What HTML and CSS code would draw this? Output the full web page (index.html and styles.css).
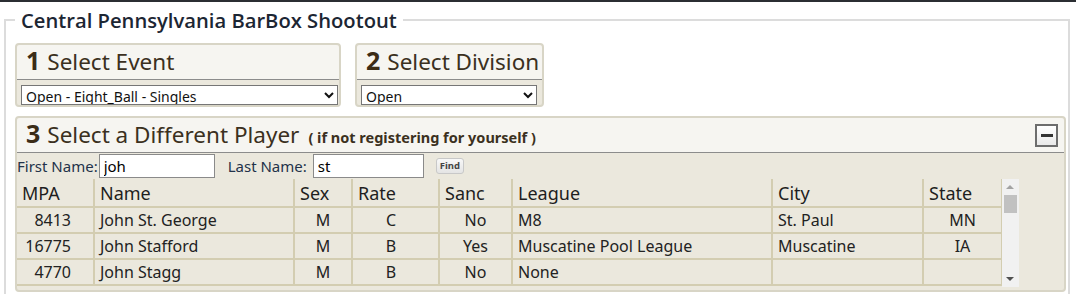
FILE: index.html
```html
<!DOCTYPE html>
<html lang="en">

<head>
  <meta charset="UTF-8">
  <meta name="viewport" content="width=device-width, initial-scale=1.0">
  <title>Register - Central Pennsylvania BarBox Shootout</title>
  <link rel="stylesheet" href="styles.css">
</head>

<body>
  <div class="topbar"></div>
  <fieldset class="event">
    <legend>Central Pennsylvania BarBox Shootout</legend>

    <div class="steps">
      <div class="panel panel-event">
        <div class="panel-head"><span class="num">1</span> Select Event</div>
        <div class="panel-body">
          <select id="event">
            <option>Open - Eight_Ball - Singles</option>
            <option>Open - Nine_Ball - Singles</option>
            <option>Open - Eight_Ball - Scotch Doubles</option>
          </select>
        </div>
      </div>
      <div class="panel panel-division">
        <div class="panel-head"><span class="num">2</span> Select Division</div>
        <div class="panel-body">
          <select id="division">
            <option>Open</option>
            <option>Ladies</option>
          </select>
        </div>
      </div>
    </div>

    <div class="panel panel-player">
      <div class="panel-head">
        <span class="num">3</span> Select a Different Player
        <span class="note">( if not registering for yourself )</span>
        <button class="collapse" title="Collapse"><span></span></button>
      </div>
      <div class="panel-body">
        <form class="search" id="searchForm">
          <label for="first" class="first-label">First Name:</label>
          <input type="text" id="first" value="joh">
          <label for="last" class="last-label">Last Name:</label>
          <input type="text" id="last" value="st">
          <button type="submit" class="find">Find</button>
        </form>
        <div class="results">
          <div class="table-wrap">
            <table class="players">
              <colgroup>
                <col style="width: 77px">
                <col style="width: 200px">
                <col style="width: 58px">
                <col style="width: 87px">
                <col style="width: 73px">
                <col style="width: 260px">
                <col style="width: 151px">
                <col style="width: 79px">
              </colgroup>
              <thead>
                <tr>
                  <th>MPA</th><th>Name</th><th>Sex</th><th>Rate</th><th>Sanc</th><th>League</th><th>City</th><th>State</th>
                </tr>
              </thead>
              <tbody>
                <tr><td class="num-col">8413</td><td>John St. George</td><td class="c">M</td><td class="rate">C</td><td class="c">No</td><td>M8</td><td>St. Paul</td><td class="c">MN</td></tr>
                <tr><td class="num-col">16775</td><td>John Stafford</td><td class="c">M</td><td class="rate">B</td><td class="c">Yes</td><td>Muscatine Pool League</td><td>Muscatine</td><td class="c">IA</td></tr>
                <tr><td class="num-col">4770</td><td>John Stagg</td><td class="c">M</td><td class="rate">B</td><td class="c">No</td><td>None</td><td></td><td class="c"></td></tr>
              </tbody>
            </table>
          </div>
          <div class="scrollbar">
            <div class="arrow up"></div>
            <div class="track"><div class="thumb"></div></div>
            <div class="arrow down"></div>
          </div>
        </div>
      </div>
    </div>
  </fieldset>

  <script>
    document.getElementById('searchForm').addEventListener('submit', (e) => {
      e.preventDefault();
    });
  </script>
</body>

</html>
```

FILE: styles.css
```css
* {
  box-sizing: border-box;
}

body {
  margin: 0;
  font-family: 'Noto Sans', sans-serif;
  background: white;
  color: #222;
}

.topbar {
  height: 2px;
  background: #2b2e33;
}

.event {
  margin: 5px 6px 0 4px;
  padding: 0 2px 10px 9px;
  border: 2px solid #dcdcdc;
}

.event legend {
  padding: 0 6px;
  font-family: 'Open Sans', sans-serif;
  font-weight: 600;
  font-size: 20.2px;
  line-height: 26px;
  color: #1c2633;
}

.steps {
  display: flex;
  gap: 14px;
  margin-top: 10px;
}

.panel {
  border: 2px solid #d8d5c6;
  border-radius: 4px;
  background: #ebe8dd;
}

.panel-head {
  display: flex;
  align-items: baseline;
  height: 35px;
  padding: 0 6px 0 9px;
  background: #f6f5f1;
  border-bottom: 1px solid #8c8c8c;
  border-radius: 3px 3px 0 0;
  font-size: 22.5px;
  line-height: 31px;
  color: #3b3020;
  white-space: nowrap;
}

.panel-head .num {
  font-size: 25px;
  font-weight: bold;
  color: #3b2c17;
  margin-right: 7px;
}

.panel-head .note {
  font-size: 14.5px;
  font-weight: bold;
  margin-left: 9px;
}

.panel-body {
  padding: 5px 3px 0 4px;
}

.panel-body select {
  display: block;
  height: 20px;
  font-family: 'Noto Sans', sans-serif;
  font-size: 14px;
  color: #111;
  border: 1px solid #767676;
  background: white;
}

.panel-event {
  width: 326px;
}

.panel-event select {
  width: 317px;
}

.panel-division {
  width: 189px;
}

.panel-division select {
  width: 176px;
}

.panel-player {
  margin-top: 9px;
}

.panel-player .panel-body {
  padding: 0 0 3px 0;
}

.collapse {
  align-self: center;
  margin-left: auto;
  width: 23px;
  height: 23px;
  padding: 0;
  border: 2px solid #6d6d6d;
  background: linear-gradient(#ffffff, #e9e9e9);
  display: flex;
  align-items: center;
  justify-content: center;
  cursor: pointer;
}

.collapse span {
  display: block;
  width: 12px;
  height: 3px;
  background: #333;
}

.search {
  display: flex;
  align-items: center;
  height: 26px;
  font-size: 15px;
  color: #23324a;
}

.search .first-label {
  margin-right: 1px;
}

.search .last-label {
  margin-left: 13px;
  margin-right: 6px;
}

.search input {
  width: 116px;
  height: 24px;
  padding: 0 4px;
  font-family: 'Noto Sans', sans-serif;
  font-size: 15px;
  border: 1px solid #8a8a8a;
  background: white;
}

.search input#last {
  width: 111px;
}

.find {
  margin-left: 12px;
  height: 16px;
  padding: 0 3px;
  font-family: 'Noto Sans', sans-serif;
  font-size: 9.5px;
  font-weight: bold;
  line-height: 12px;
  color: #444;
  border: 1px solid #c8c8c8;
  border-radius: 3px;
  background: linear-gradient(#f8f8f8, #e4e4e4);
  cursor: pointer;
}

.results {
  display: flex;
  height: 108px;
}

.table-wrap {
  width: 985px;
  overflow: hidden;
}

.players {
  width: 985px;
  table-layout: fixed;
  border-collapse: collapse;
  font-size: 16px;
}

.players th,
.players td {
  border: 2px solid #d3cdb1;
  padding: 0 5px;
  text-align: left;
  white-space: nowrap;
  overflow: hidden;
}

.players th {
  height: 28px;
  font-size: 18px;
  font-weight: normal;
  color: #1e1e1e;
}

.players td {
  height: 26px;
  color: #222;
}

.players tr > :first-child {
  border-left: none;
}

.players thead th {
  border-top: none;
}

.players .num-col {
  text-align: right;
  padding-right: 22px;
}

.players .c {
  text-align: center;
}

.players .rate {
  text-align: center;
  padding-right: 14px;
}

/* fake scrollbar, list is scrolled to the top */
.scrollbar {
  width: 17px;
  display: flex;
  flex-direction: column;
  background: #f1f1f1;
}

.scrollbar .arrow {
  height: 16px;
  position: relative;
}

.scrollbar .arrow::after {
  content: '';
  position: absolute;
  left: 4px;
  top: 6px;
  border-left: 4px solid transparent;
  border-right: 4px solid transparent;
}

.scrollbar .up::after {
  border-bottom: 4px solid #a3a3a3;
}

.scrollbar .down::after {
  border-top: 4px solid #505050;
}

.scrollbar .track {
  flex: 1;
  padding: 0 2px;
}

.scrollbar .thumb {
  height: 18px;
  background: #c1c1c1;
}
```
